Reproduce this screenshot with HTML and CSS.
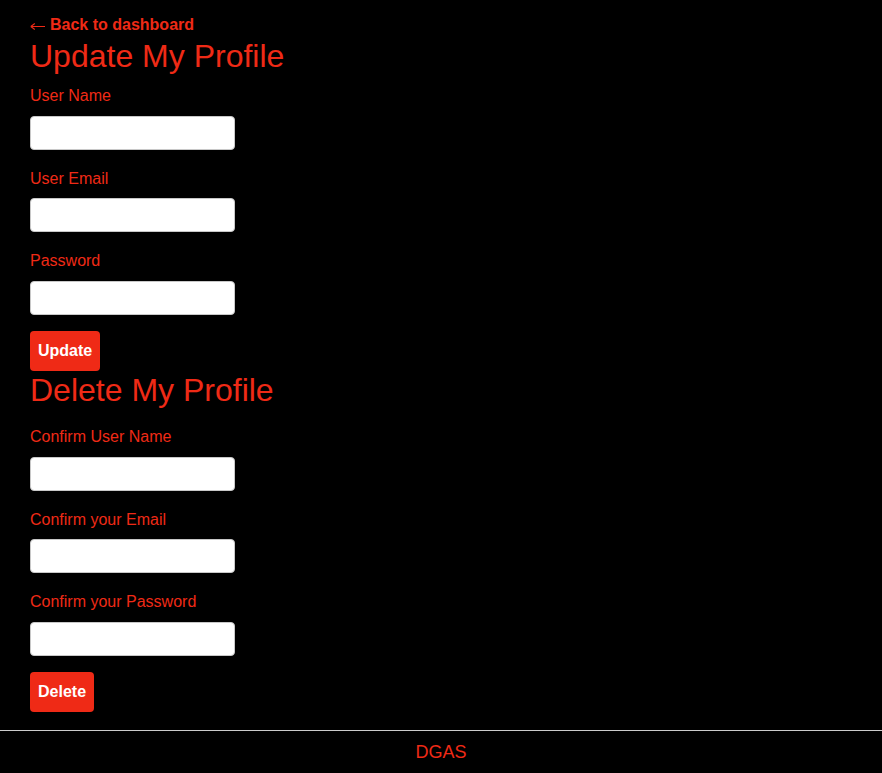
FILE: index.html
```html
<!DOCTYPE html>
<html>
<head>
<meta charset="utf-8">
<link rel="stylesheet" href="styles.css">
</head>
<body>
<main class="page">
  <a class="back" href="#"><svg class="arrow" width="16" height="9" viewBox="0 0 16 9"><path d="M0.8 4.5H15M0.8 4.5L4.8 1.5M0.8 4.5L4.8 7.5" fill="none" stroke="#ef2a16" stroke-width="1.1"/></svg>Back to dashboard</a>
  <h1 class="title">Update My Profile</h1>
  <form class="form">
    <label class="label">User Name</label>
    <input class="input" type="text">
    <label class="label">User Email</label>
    <input class="input" type="text">
    <label class="label">Password</label>
    <input class="input" type="password">
    <button class="btn" type="button">Update</button>
  </form>
  <h1 class="title title-delete">Delete My Profile</h1>
  <form class="form form-delete">
    <label class="label">Confirm User Name</label>
    <input class="input" type="text">
    <label class="label">Confirm your Email</label>
    <input class="input" type="text">
    <label class="label">Confirm your Password</label>
    <input class="input" type="password">
    <button class="btn" type="button">Delete</button>
  </form>
</main>
<footer class="footer">DGAS</footer>
</body>
</html>
```
FILE: styles.css
```css
html, body {
  margin: 0;
  padding: 0;
  background: #000;
}
body {
  font-family: "Liberation Sans", Arial, sans-serif;
  color: #ef2a16;
}
.page {
  padding: 16px 30px 18px;
  display: flex;
  flex-direction: column;
  align-items: flex-start;
}
.back {
  display: flex;
  align-items: center;
  gap: 4px;
  color: #ef2a16;
  font-weight: bold;
  font-size: 16px;
  line-height: 18px;
  text-decoration: none;
}
.arrow {
  display: block;
  margin-top: 2px;
}
.title {
  margin: 4px 0 0;
  font-size: 32px;
  font-weight: normal;
  line-height: normal;
}
.title-delete {
  margin-top: 0.5px;
}
.form {
  display: flex;
  flex-direction: column;
  align-items: flex-start;
  margin-top: 12px;
}
.form-delete {
  margin-top: 19.7px;
}
.label {
  font-size: 16px;
  line-height: 18.5px;
  margin-bottom: 10px;
}
.input {
  box-sizing: border-box;
  width: 205px;
  height: 34px;
  border: 1px solid #c8c8c8;
  border-radius: 4px;
  background: #fff;
  margin: 0 0 20px;
}
.btn {
  background: #ef2a16;
  color: #fff;
  font-family: "Liberation Sans", Arial, sans-serif;
  font-weight: bold;
  font-size: 16px;
  line-height: 18.5px;
  border: none;
  border-radius: 4px;
  padding: 11px 8px;
  margin-top: -4px;
}
.footer {
  border-top: 1px solid #ccc;
  text-align: center;
  font-size: 18px;
  line-height: normal;
  padding: 11px 0 12px;
  color: #ef2a16;
}
```
